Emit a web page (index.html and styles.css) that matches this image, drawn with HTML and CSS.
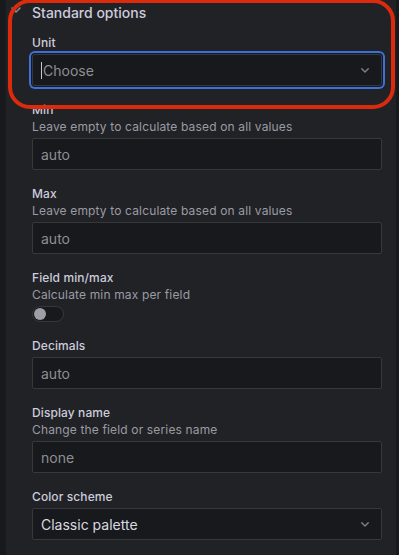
FILE: index.html
```html
<!DOCTYPE html>
<html lang="en">
<head>
	<meta charset="UTF-8">
	<meta name="viewport" content="width=device-width, initial-scale=1">
	<title>Standard options</title>
	<link rel="stylesheet" href="styles.css">
</head>
<body>
	<div class="pane">
		<div class="category-header">
			<svg class="category-chevron" width="16" height="16" viewBox="0 0 16 16"><path d="M4 6 L8 10 L12 6" fill="none" stroke="#8e8f96" stroke-width="1.5" stroke-linecap="round" stroke-linejoin="round"/></svg>
			<span>Standard options</span>
		</div>

		<div class="field">
			<div class="field-header">
				<label class="field-label">Unit</label>
			</div>
			<div class="input select focused">
				<span class="caret"></span>
				<span class="placeholder">Choose</span>
				<svg class="select-chevron" width="8" height="5" viewBox="0 0 8 5"><path d="M0.75 0.75 L4 4 L7.25 0.75" fill="none" stroke="#80818a" stroke-width="1.4" stroke-linecap="round" stroke-linejoin="round"/></svg>
			</div>
		</div>

		<div class="field">
			<div class="field-header">
				<label class="field-label">Min</label>
				<div class="field-desc">Leave empty to calculate based on all values</div>
			</div>
			<div class="input"><span class="placeholder">auto</span></div>
		</div>

		<div class="field">
			<div class="field-header">
				<label class="field-label">Max</label>
				<div class="field-desc">Leave empty to calculate based on all values</div>
			</div>
			<div class="input"><span class="placeholder">auto</span></div>
		</div>

		<div class="field">
			<div class="field-header">
				<label class="field-label">Field min/max</label>
				<div class="field-desc">Calculate min max per field</div>
			</div>
			<div class="toggle"><span class="toggle-knob"></span></div>
		</div>

		<div class="field">
			<div class="field-header">
				<label class="field-label">Decimals</label>
			</div>
			<div class="input"><span class="placeholder">auto</span></div>
		</div>

		<div class="field">
			<div class="field-header">
				<label class="field-label">Display name</label>
				<div class="field-desc">Change the field or series name</div>
			</div>
			<div class="input"><span class="placeholder">none</span></div>
		</div>

		<div class="field">
			<div class="field-header">
				<label class="field-label">Color scheme</label>
			</div>
			<div class="input select">
				<span class="value">Classic palette</span>
				<svg class="select-chevron" width="8" height="5" viewBox="0 0 8 5"><path d="M0.75 0.75 L4 4 L7.25 0.75" fill="none" stroke="#80818a" stroke-width="1.4" stroke-linecap="round" stroke-linejoin="round"/></svg>
			</div>
		</div>

		<div class="highlight"></div>
	</div>
</body>
</html>
```

FILE: styles.css
```css
:root {
	--page-bg: #18191c;
	--pane-bg: #212226;
	--input-bg: #18191c;
	--border-color: #37383d;
	--text-color: #ccccdc;
	--text-secondary: #9a9ba3;
	--placeholder: #8d8e95;
	--focus: #3d71d9;
	--annotation: #dc2a0c;
}

html, body {
	height: 100%;
}

body {
	margin: 0;
	background: var(--page-bg);
	font-family: Inter, "Noto Sans", sans-serif;
	color: var(--text-color);
	overflow: hidden;
}

.pane {
	position: relative;
	margin: 0 3px 0 6px;
	min-height: 100%;
	padding: 1px 14px 0 26px;
	background: var(--pane-bg);
	box-sizing: border-box;
}

.category-header {
	display: flex;
	align-items: center;
	gap: 8px;
	margin-left: -24px;
	margin-bottom: 12px;
	height: 22px;
	font-size: 14px;
	font-weight: 500;
	color: var(--text-color);
}

.category-chevron {
	margin-top: -5px;
}

.field {
	margin-bottom: 16px;
}

.field-header {
	margin-bottom: 4px;
}

.field-label {
	display: block;
	font-size: 12px;
	font-weight: 500;
	line-height: 15px;
	letter-spacing: 0.1px;
}

.field-desc {
	margin-top: 2px;
	font-size: 12px;
	line-height: 15px;
	letter-spacing: 0.15px;
	color: var(--text-secondary);
}

.input {
	display: flex;
	align-items: center;
	height: 32px;
	padding: 0 8px;
	background: var(--input-bg);
	border: 1px solid var(--border-color);
	border-radius: 2px;
	box-sizing: border-box;
	font-size: 14px;
}

.input.focused {
	box-shadow: 0 0 0 1px var(--input-bg), 0 0 0 3px var(--focus);
	border-radius: 3px;
}

.placeholder {
	color: var(--placeholder);
}

.value {
	color: #d8d9e0;
}

.caret {
	width: 1px;
	height: 17px;
	background: #c7c8d0;
	margin-right: 1px;
}

.select-chevron {
	margin-left: auto;
	margin-right: 4px;
}

.toggle {
	position: relative;
	width: 32px;
	height: 16px;
	background: var(--input-bg);
	border: 1px solid var(--border-color);
	border-radius: 8px;
	box-sizing: border-box;
}

.toggle-knob {
	position: absolute;
	left: 1px;
	top: 1px;
	width: 12px;
	height: 12px;
	border-radius: 50%;
	background: #9d9ea6;
}

.highlight {
	position: absolute;
	left: 2px;
	top: -1px;
	width: 387px;
	height: 110px;
	border: 4px solid var(--annotation);
	border-radius: 22px;
	box-sizing: border-box;
	pointer-events: none;
}
```
